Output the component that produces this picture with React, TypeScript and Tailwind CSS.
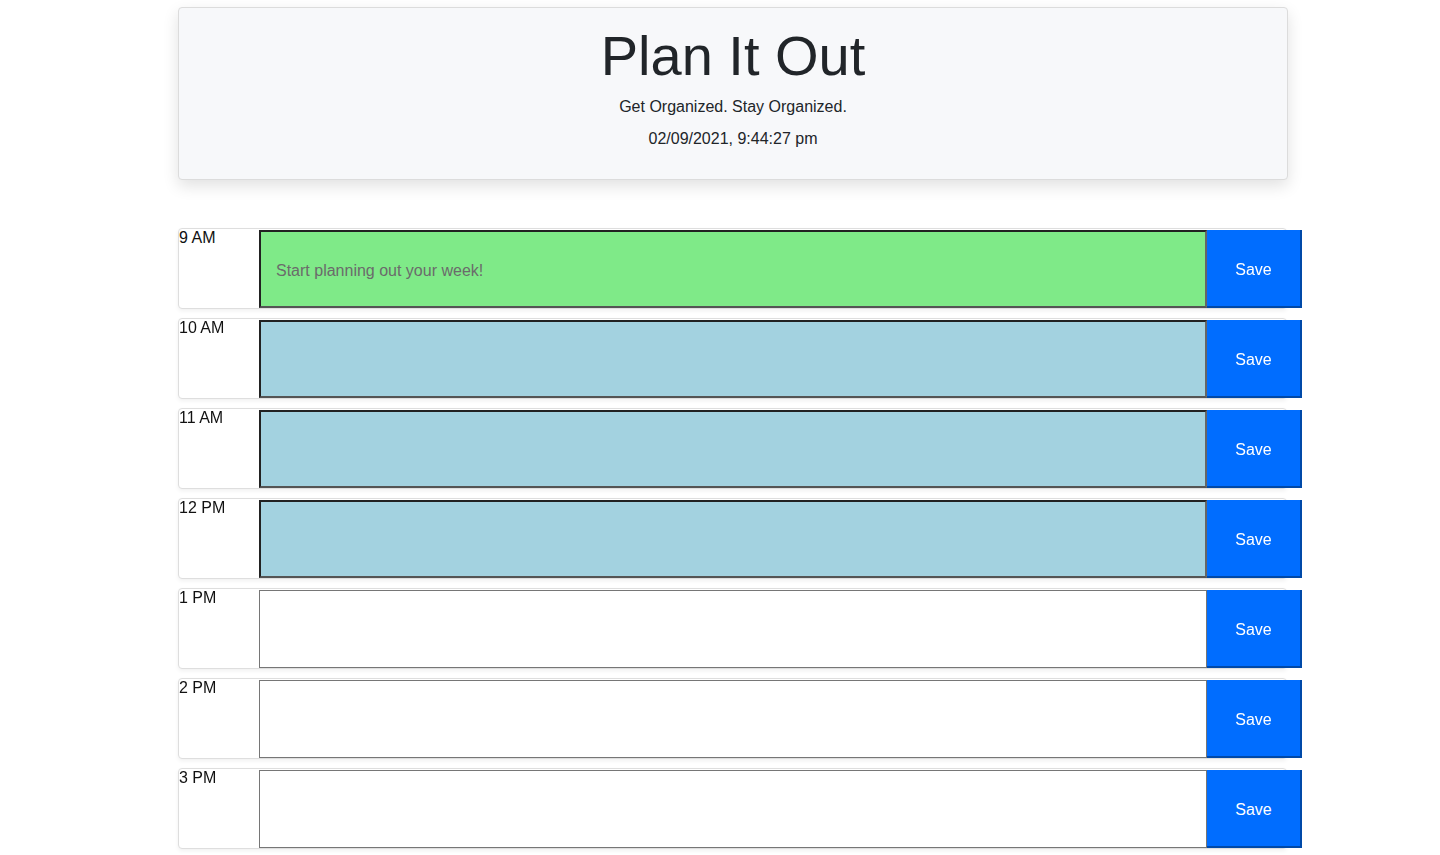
const hours = [
  { label: "9 AM", state: "present", text: "Start planning out your week!" },
  { label: "10 AM", state: "future", text: "" },
  { label: "11 AM", state: "future", text: "" },
  { label: "12 PM", state: "future", text: "" },
  { label: "1 PM", state: "past", text: "" },
  { label: "2 PM", state: "past", text: "" },
  { label: "3 PM", state: "past", text: "" },
];

function HourRow({ label, state, text }: { label: string; state: string; text: string }) {
  const area =
    state === "present"
      ? "bg-[#7fea88] border-2 border-t-[#222] border-l-[#222] border-b-[#555] border-r-[#666]"
      : state === "future"
        ? "bg-[#a3d2e0] border-2 border-t-[#222] border-l-[#222] border-b-[#555] border-r-[#666]"
        : "bg-white border border-[#767676]";

  return (
    <div className="mb-[9px] h-[81px] w-[1109px] rounded border border-[#dedede] bg-white shadow-[0_2px_4px_rgba(0,0,0,0.06)]">
      <div className="flex h-full">
        <div className="w-[80px] shrink-0 text-[16px] leading-[18px] text-[#111]">{label}</div>
        <div className="flex h-full w-[948px] shrink-0 items-start">
          <textarea
            className={`mt-px h-[78px] w-full resize-none pl-[15px] pr-4 pt-px text-[16px] leading-[76px] text-[#222] outline-none placeholder:text-[#6b6b6b] ${area}`}
            placeholder={text}
          />
        </div>
        <button className="mt-px h-[78px] w-[95px] shrink-0 border-r-2 border-b-2 border-r-[#0049a8] border-b-[#0049a8] bg-[#006dff] pt-[3px] text-[16px] text-white">
          Save
        </button>
      </div>
    </div>
  );
}

export default function App() {
  return (
    <div className="min-h-[855px] bg-white font-['Liberation_Sans',Arial,sans-serif] text-[#212529]">
      <div className="ml-[178px] pt-[7px]">
        <header className="flex h-[173px] w-[1110px] flex-col items-center rounded border border-[#dcdcdc] bg-[#f7f8fa] pt-[14px] shadow-[0_6px_16px_rgba(0,0,0,0.12)]">
          <h1 className="text-[56px] font-light leading-[67px]">Plan It Out</h1>
          <p className="mt-[6px] text-[16px] leading-6">Get Organized. Stay Organized.</p>
          <p className="mt-2 text-[16px] leading-6">02/09/2021, 9:44:27 pm</p>
        </header>

        <div className="mt-[48px]">
          {hours.map((h) => (
            <HourRow key={h.label} {...h} />
          ))}
        </div>
      </div>
    </div>
  );
}
